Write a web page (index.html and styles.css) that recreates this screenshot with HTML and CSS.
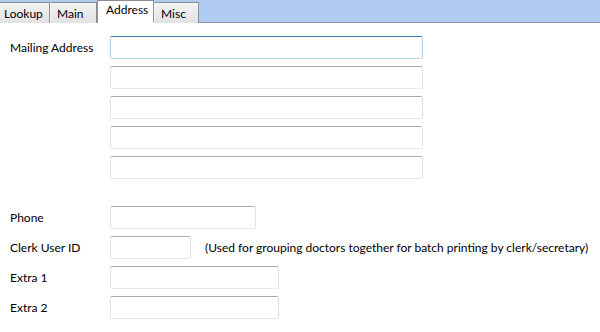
FILE: index.html
```html
<!DOCTYPE html>
<html>
<head>
<meta charset="utf-8">
<link rel="stylesheet" href="styles.css">
</head>
<body>
<div class="tabbar">
  <div class="tab t-lookup">Lookup</div>
  <div class="tab t-main">Main</div>
  <div class="tab t-address active">Address</div>
  <div class="tab t-misc">Misc</div>
</div>
<div class="content">
  <div class="form">
    <label class="lbl">Mailing Address</label>
    <input class="inp w-long focused" type="text">
    <span></span><input class="inp w-long" type="text">
    <span></span><input class="inp w-long" type="text">
    <span></span><input class="inp w-long" type="text">
    <span></span><input class="inp w-long" type="text">

    <label class="lbl gap">Phone</label>
    <input class="inp w-phone gap" type="text">

    <label class="lbl">Clerk User ID</label>
    <div class="withnote">
      <input class="inp w-clerk" type="text">
      <span class="note">(Used for grouping doctors together for batch printing by clerk/secretary)</span>
    </div>

    <label class="lbl">Extra 1</label>
    <input class="inp w-extra" type="text">

    <label class="lbl">Extra 2</label>
    <input class="inp w-extra" type="text">
  </div>
</div>
</body>
</html>
```

FILE: styles.css
```css
* { box-sizing: border-box; }
html, body {
  margin: 0;
  padding: 0;
  background: #ffffff;
  font-family: "Lato", "Open Sans", sans-serif;
  font-size: 12px;
  color: #000;
}
.tabbar {
  display: flex;
  align-items: flex-end;
  height: 23px;
  background: #b0ccf0;
  border-bottom: 1px solid #8a97b0;
}
.tab {
  height: 21px;
  margin-bottom: -1px;
  padding: 3px 0 0 6px;
  background: linear-gradient(#f3f3f3, #e2e2e2);
  border: 1px solid #8c8e94;
  border-bottom: none;
  border-left-color: #f7f7f7;
  line-height: 16px;
  white-space: nowrap;
}
.t-lookup { width: 50px; padding-left: 4px; border-left: none; }
.t-main { width: 47px; }
.t-address { width: 57px; }
.t-misc { width: 45px; }
.tab.active {
  height: 23px;
  background: #ffffff;
  padding-top: 1px;
  padding-left: 8px;
  border-left-color: #8c8e94;
  border-bottom: 1px solid #fff;
}
.content {
  padding: 13px 0 0 10px;
}
.form {
  display: grid;
  grid-template-columns: 100px auto;
  row-gap: 7px;
  align-items: center;
  justify-items: start;
}
.lbl { white-space: nowrap; }
.inp {
  height: 23px;
  margin: 0;
  padding: 0 3px;
  border: 1px solid #e2e3ea;
  border-top-color: #abadb3;
  border-bottom-color: #e3e9ef;
  border-radius: 2px;
  background: #fff;
  outline: none;
  font: inherit;
}
.inp.focused {
  border-color: #b5cfe7;
  border-top-color: #3d7bad;
  border-bottom-color: #b7d9ed;
}
.gap { margin-top: 20px; }
.w-long { width: 313px; }
.w-phone { width: 146px; }
.w-clerk { width: 81px; }
.w-extra { width: 169px; }
.withnote {
  display: flex;
  align-items: center;
}
.note {
  margin-left: 14px;
  white-space: nowrap;
}
```
